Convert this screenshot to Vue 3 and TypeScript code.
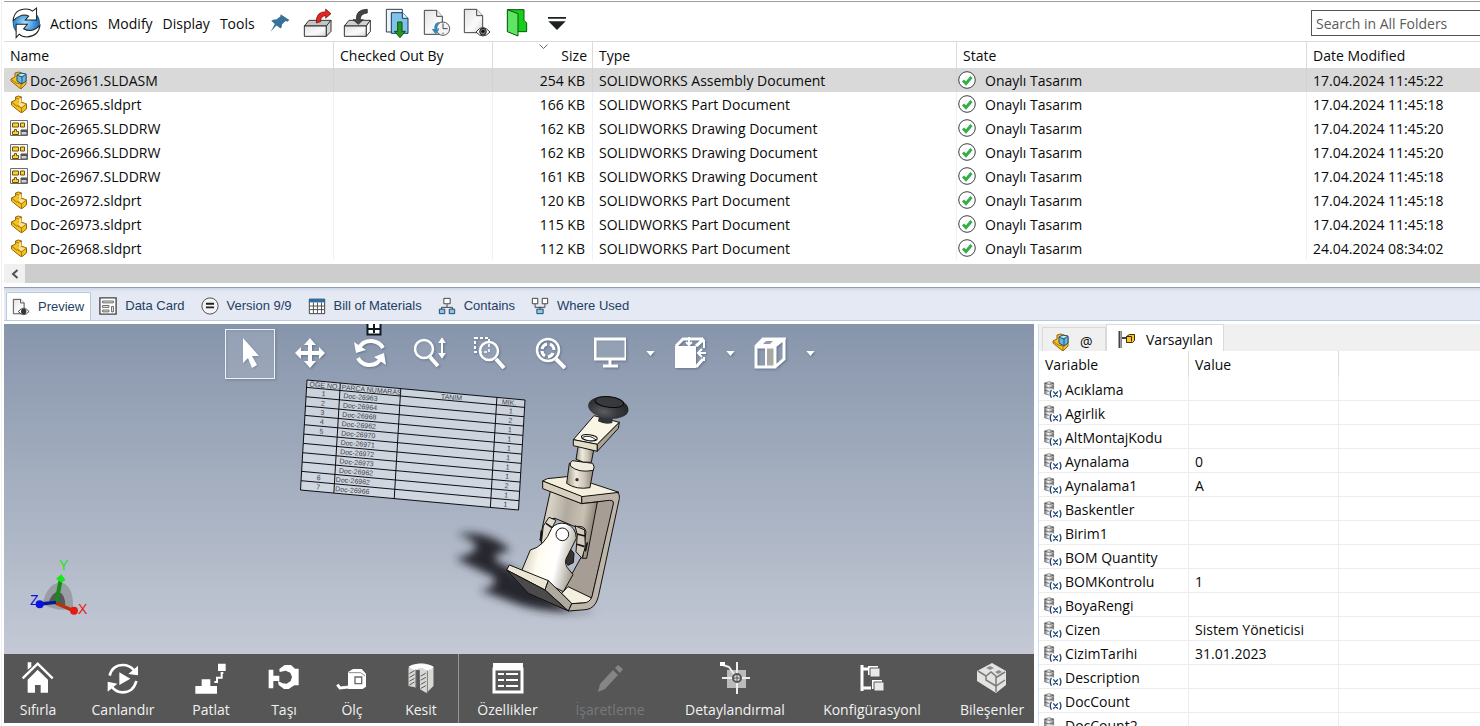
<script setup lang="ts">
import { ref } from 'vue'

interface FileRow {
  name: string
  icon: 'assembly' | 'part' | 'drawing'
  size: string
  type: string
  date: string
}

const state = 'Onaylı Tasarım'
const partType = 'SOLIDWORKS Part Document'
const drawingType = 'SOLIDWORKS Drawing Document'

const files: FileRow[] = [
  { name: 'Doc-26961.SLDASM', icon: 'assembly', size: '254 KB', type: 'SOLIDWORKS Assembly Document', date: '17.04.2024 11:45:22' },
  { name: 'Doc-26965.sldprt', icon: 'part', size: '166 KB', type: partType, date: '17.04.2024 11:45:18' },
  { name: 'Doc-26965.SLDDRW', icon: 'drawing', size: '162 KB', type: drawingType, date: '17.04.2024 11:45:20' },
  { name: 'Doc-26966.SLDDRW', icon: 'drawing', size: '162 KB', type: drawingType, date: '17.04.2024 11:45:20' },
  { name: 'Doc-26967.SLDDRW', icon: 'drawing', size: '161 KB', type: drawingType, date: '17.04.2024 11:45:18' },
  { name: 'Doc-26972.sldprt', icon: 'part', size: '120 KB', type: partType, date: '17.04.2024 11:45:18' },
  { name: 'Doc-26973.sldprt', icon: 'part', size: '115 KB', type: partType, date: '17.04.2024 11:45:18' },
  { name: 'Doc-26968.sldprt', icon: 'part', size: '112 KB', type: partType, date: '24.04.2024 08:34:02' },
]
const selected = ref(0)

const menus = ['Actions', 'Modify', 'Display', 'Tools']
const commands = [
  { id: 'checkout', label: 'Check out' },
  { id: 'checkin', label: 'Check in' },
  { id: 'getlatest', label: 'Get latest version' },
  { id: 'getversion', label: 'Get version' },
  { id: 'viewfile', label: 'View file' },
  { id: 'explore', label: 'Open folder' },
  { id: 'more', label: 'More commands' },
]

const tabs = [
  { id: 'preview', label: 'Preview' },
  { id: 'datacard', label: 'Data Card' },
  { id: 'version', label: 'Version 9/9' },
  { id: 'bom', label: 'Bill of Materials' },
  { id: 'contains', label: 'Contains' },
  { id: 'whereused', label: 'Where Used' },
]
const activeTab = ref('preview')

const viewTools = [
  { id: 'select', label: 'Select', menu: false },
  { id: 'pan', label: 'Pan', menu: false },
  { id: 'rotate', label: 'Rotate', menu: false },
  { id: 'zoom', label: 'Zoom', menu: false },
  { id: 'zoomarea', label: 'Zoom to area', menu: false },
  { id: 'zoomfit', label: 'Zoom to fit', menu: false },
  { id: 'screen', label: 'Full screen', menu: true },
  { id: 'orient', label: 'View orientation', menu: true },
  { id: 'shading', label: 'Display style', menu: true },
]
const activeTool = ref('select')

const actions = [
  { id: 'home', label: 'Sıfırla', size: 'w68' },
  { id: 'animate', label: 'Canlandır', size: 'w102' },
  { id: 'explode', label: 'Patlat', size: 'w74' },
  { id: 'move', label: 'Taşı', size: 'w72' },
  { id: 'measure', label: 'Ölç', size: 'w64' },
  { id: 'section', label: 'Kesit', size: 'w74' },
  { id: 'properties', label: 'Özellikler', size: 'w98', split: true },
  { id: 'markup', label: 'İşaretleme', size: 'w108', disabled: true },
  { id: 'detail', label: 'Detaylandırmal', size: 'w142' },
  { id: 'config', label: 'Konfigürasyonl', size: 'w132' },
  { id: 'components', label: 'Bileşenler', size: 'w108' },
]

const variables: [string, string][] = [
  ['Acıklama', ''], ['Agirlik', ''], ['AltMontajKodu', ''], ['Aynalama', '0'], ['Aynalama1', 'A'],
  ['Baskentler', ''], ['Birim1', ''], ['BOM Quantity', ''], ['BOMKontrolu', '1'], ['BoyaRengi', ''],
  ['Cizen', 'Sistem Yöneticisi'], ['CizimTarihi', '31.01.2023'], ['Description', ''], ['DocCount', ''], ['DocCount2', ''],
]

/* Parts table that hangs in the 3D scene: a slightly tilted sheet. */
const bom: [string, string, string][] = [
  ['1', 'Doc-26963', '1'], ['2', 'Doc-26964', '2'], ['3', 'Doc-26968', '1'], ['4', 'Doc-26962', '1'],
  ['5', 'Doc-26970', '1'], ['', 'Doc-26971', '1'], ['', 'Doc-26972', '1'], ['', 'Doc-26973', '1'],
  ['', 'Doc-26962', '2'], ['6', 'Doc-26962', '1'], ['7', 'Doc-26966', '1'],
]
const sheetPoint = (u: number, v: number): [number, number] => [307 + 218 * u - 6.5 * v, 380 + 20 * u + 110 * v]
const sheetLine = (u1: number, v1: number, u2: number, v2: number): string =>
  `M${sheetPoint(u1, v1).join(' ')}L${sheetPoint(u2, v2).join(' ')}`
const rowAt = (i: number): number => (i === 0 ? 0 : (7.4 + (i - 1) * 9.33) / 110)
const columnsAt = [0, 0.153, 0.43, 0.871, 1]
const sheetGrid = [
  ...Array.from({ length: 12 }, (_, i) => sheetLine(0, rowAt(i), 1, rowAt(i))),
  sheetLine(0, 1, 1, 1),
  ...columnsAt.map((u) => sheetLine(u, 0, u, 1)),
].join('')
const sheetText = (u: number, v: number): string => `translate(${sheetPoint(u, v).join(' ')}) rotate(5)`
</script>

<template>
  <div class="app">
    <svg class="defs" aria-hidden="true">
      <defs>
        <linearGradient id="paper" x1="0" y1="0" x2="1" y2="1"><stop offset="0" stop-color="#e2e2e2" /><stop offset=".6" stop-color="#fafafa" /><stop offset="1" stop-color="#d4d4d4" /></linearGradient>
        <radialGradient id="globe" cx=".45" cy=".5" r=".6"><stop offset="0" stop-color="#aee0fb" /><stop offset=".6" stop-color="#3c95dc" /><stop offset="1" stop-color="#1c5ea8" /></radialGradient>
        <linearGradient id="drum"><stop offset="0" stop-color="#777" /><stop offset=".4" stop-color="#f4f4f4" /><stop offset="1" stop-color="#888" /></linearGradient>
      </defs>

      <symbol id="part" viewBox="1 0 17 18">
        <path d="M2 7l4-2V2l3-1 3 1v5l5 2v5l-5 4-4-3-6-5z" fill="#f3c21f" stroke="#94660f" />
        <path d="M2 7l5 4 5-3 5 1-5 4-4-2M6 3l3 1 3-2M9 4v4M12 13v5" fill="none" stroke="#a87512" />
        <path d="M9 4l3-1v4l-3 2zM8 9l4-1 4 1-4 3z" fill="#ffe48a" />
      </symbol>
      <symbol id="assembly" viewBox="1 0 18 18">
        <path d="M2 8l4-2V2l4-1 7 3v9l-5 5-4-3-6-5z" fill="#f3c21f" stroke="#94660f" />
        <path d="M2 8l5 4 5 1v4" fill="none" stroke="#a87512" />
        <path d="M8 4l4-2 5 1v7l-4 3-5-3z" fill="#6cb7df" stroke="#245070" />
        <path d="M8 4l5 2 4-3M13 6v7" fill="none" stroke="#245070" />
        <path d="M9 4l3-1 4 0-3 2z" fill="#c8eafa" />
      </symbol>
      <symbol id="drawing" viewBox="0 0 18 18">
        <path d="M.5 1.500h17v15h-17z" fill="#f7f7f4" stroke="#6e6e6e" />
        <path d="M2.500 4h6v4h-6zM10.500 4h4v4h-4zM4.500 10.500h2v2h2v3h-6v-3h2z" fill="#ffcf2b" stroke="#6d5312" />
        <path d="M11 11h6v5h-6z" fill="#d2d2d2" stroke="#555" />
        <path d="M11 11h6v2h-6z" fill="#555" />
      </symbol>
      <symbol id="approved" viewBox="0 0 18 18">
        <circle cx="9" cy="9" r="8.300" fill="#fff" stroke="#3a4140" />
        <path d="M5 9.500l3 3L13.500 6" fill="none" stroke="#37ad4a" stroke-width="3" />
      </symbol>
      <symbol id="variable" viewBox="42 180 54 56">
        <path d="M43 186q14-8 28 0v34q-14 8-28 0z" fill="url(#drum)" stroke="#666" stroke-width="2" />
        <path d="M43 187q14 7 28 0M43 198q14 7 28 0M43 209q14 7 28 0" fill="none" stroke="#444" stroke-width="2" />
        <path d="M58 206h40v30h-40z" fill="#fff" />
        <path d="M64 208q-7 11 0 24M90 208q7 11 0 24M70 212l14 17M84 212l-14 17" fill="none" stroke="#1e456e" stroke-width="4" />
      </symbol>

      <symbol id="refresh" viewBox="34 22 88 94">
        <circle cx="79" cy="69" r="39" fill="url(#globe)" stroke="#173d69" stroke-width="2" />
        <path d="M40 62Q44 28 78 28q12 0 19 6l12-9v35H76l10-11q-18-11-46 13z" fill="#fff" stroke="#222" stroke-width="3" />
        <path d="M119 76q-4 32-39 34-14 0-22-8l-9 10V73h33L71 86q24 14 48-10z" fill="#fff" stroke="#222" stroke-width="3" />
      </symbol>
      <symbol id="pin" viewBox="808 36 62 58">
        <path d="M841 38l27 18-6 5-6-2-11 11q1 8-4 12L828 73l-18 19 13-24-11-10q6-5 15-4l13-9z" fill="#377099" />
      </symbol>
      <symbol id="checkout" viewBox="36 21 96 96">
        <path d="M46 78l14-17h66l-12 17z" fill="#c4c4c4" stroke="#333" stroke-width="3" />
        <path d="M46 78h66v31H46z" fill="url(#paper)" stroke="#333" stroke-width="3" />
        <path d="M112 78l14-17v33l-14 15z" fill="#d4d4d4" stroke="#333" stroke-width="3" />
        <path d="M82 69Q80 35 110 35v-8l16 14-16 14v-8Q94 48 95 65z" fill="#e52620" stroke="#5e0b08" stroke-width="2" />
      </symbol>
      <symbol id="checkin" viewBox="156 21 96 96">
        <path d="M166 78l14-17h64l-12 17z" fill="#d0d0d0" stroke="#333" stroke-width="3" />
        <path d="M166 78h66v31h-66z" fill="url(#paper)" stroke="#333" stroke-width="3" />
        <path d="M232 78l12-17v33l-12 15z" fill="#fff" stroke="#333" stroke-width="3" />
        <path d="M235 28q-35 0-33 31h-10l16 14 15-14h-9q-1-18 21-20z" fill="#444" stroke="#222" stroke-width="2" />
      </symbol>
      <symbol id="getlatest" viewBox="276 21 96 96">
        <path d="M292 28h48v68h-48z" fill="#f2f2f2" stroke="#29425b" stroke-width="3" />
        <path d="M307 38h33l17 17v45h-50z" fill="#7fc2ea" stroke="#173c5e" stroke-width="3" />
        <path d="M340 38v17h17" fill="#d8effc" stroke="#173c5e" stroke-width="3" />
        <path d="M326 66h13v28h10l-16 19-17-19h10z" fill="#259622" stroke="#0d4f0c" stroke-width="3" />
      </symbol>
      <symbol id="getversion" viewBox="396 21 96 96">
        <path d="M406 31h37l17 18v54h-54z" fill="url(#paper)" stroke="#444" stroke-width="3" />
        <path d="M443 31v18h17" fill="#eee" stroke="#444" stroke-width="3" />
        <circle cx="462" cy="86" r="20" fill="#f4f4f4" stroke="#555" stroke-width="3" />
        <path d="M462 70v16h14M462 98v4M446 86h3" fill="none" stroke="#444" stroke-width="3" />
        <path d="M456 65q-12 4-11 23h6l-11 15-12-16h8q-2-22 20-22z" fill="#3b86b5" />
      </symbol>
      <symbol id="viewfile" viewBox="516 21 96 96">
        <path d="M526 28h37l18 19v51h-55z" fill="url(#paper)" stroke="#444" stroke-width="3" />
        <path d="M563 28v19h18" fill="#eee" stroke="#444" stroke-width="3" />
        <path d="M561 96q20-27 42 0-21 24-42 0z" fill="#fff" stroke="#333" stroke-width="3" />
        <circle cx="582" cy="95" r="10" fill="#777" stroke="#222" stroke-width="3" /><circle cx="582" cy="94" r="5" fill="#111" />
      </symbol>
      <symbol id="explore" viewBox="636 21 96 96">
        <path d="M656 29h49v32l8 8v26h-56z" fill="#17cf1b" stroke="#08560a" stroke-width="3" />
        <path d="M655 29l32 12v67l-32-13z" fill="#5fe563" stroke="#08560a" stroke-width="3" />
      </symbol>
      <symbol id="more" viewBox="756 21 96 96">
        <path d="M777 51h54v5h-54zM778 64h52l-26 26z" fill="#1d211d" />
      </symbol>

      <symbol id="preview" viewBox="0 0 20 20">
        <path d="M1.500 1.500h8l4 4v12h-12z" fill="url(#paper)" stroke="#444" /><path d="M9.500 1.500v4h4" fill="#fff" stroke="#444" />
        <path d="M7 15q6-7 12 0-6 7-12 0z" fill="#fff" stroke="#333" /><circle cx="13" cy="15" r="3" fill="#333" />
      </symbol>
      <symbol id="datacard" viewBox="0 0 20 20">
        <path d="M1 1h18v18H1z" fill="#fff" stroke="#444" stroke-width="1.500" />
        <path d="M4 4.500h12v2H4zM4 9.500h7v2H4zM4 14.500h7v2H4zM14 10.500h2v6h-2z" fill="#fff" stroke="#555" />
      </symbol>
      <symbol id="version" viewBox="0 0 20 20">
        <circle cx="10" cy="10" r="9" fill="#f4f4f4" stroke="#444" /><path d="M5.500 7.500h9M5.500 11.500h9" stroke="#222" stroke-width="2" />
      </symbol>
      <symbol id="bom" viewBox="0 0 20 20">
        <path d="M1.500 2.500h17v16h-17z" fill="#fff" stroke="#333" /><path d="M1 2h18v4H1z" fill="#2c6e9f" />
        <path d="M6 6v12M10.500 6v12M15 6v12M2 10h16M2 14h16" stroke="#444" />
      </symbol>
      <symbol id="contains" viewBox="0 0 20 20">
        <path d="M10 8v3.500M4 14v-2.500h12V14" fill="none" stroke="#333" /><path d="M6.500 1.500h7v6h-7z" fill="#fff" stroke="#333" />
        <path d="M1.500 13.500h6v5h-6zM12.500 13.500h6v5h-6z" fill="#8bc8ec" stroke="#173c5e" />
      </symbol>
      <symbol id="whereused" viewBox="0 0 20 20">
        <path d="M4.500 8v3.500h11V8M10 11v3" fill="none" stroke="#333" /><path d="M1.500 1.500h6v6h-6zM12.500 1.500h6v6h-6z" fill="#fff" stroke="#333" />
        <path d="M6.500 13.500h7v5h-7z" fill="#8bc8ec" stroke="#173c5e" />
      </symbol>

      <symbol id="select" viewBox="0 0 32 32"><path d="M9 1l16 18-7 0 5 9-5 3-4-10-5 5z" fill="#fff" /></symbol>
      <symbol id="pan" viewBox="0 0 32 32"><path d="M16 1l6 7h-4v6h7v-4l6 6-6 6v-4h-7v6h4l-6 7-6-7h4v-6H7v4l-6-6 6-6v4h7V8h-4z" fill="#fff" /></symbol>
      <symbol id="rotate" viewBox="0 0 32 32">
        <path d="M4 13Q8 3 18 4q8 1 11 7M28 19q-4 10-14 9-7-1-10-7" fill="none" stroke="#fff" stroke-width="4" />
        <path d="M0 5l2 11 10-3zM32 28l-2-12-10 4z" fill="#fff" />
      </symbol>
      <symbol id="zoom" viewBox="0 0 32 32">
        <circle cx="10" cy="12" r="9" fill="#bac5d5" fill-opacity=".35" stroke="#fff" stroke-width="2.500" /><path d="M16 20l8 9" stroke="#fff" stroke-width="4" />
        <path d="M28 4v15M26 5l2-3 2 3zM26 17l2 3 2-3z" fill="#fff" stroke="#fff" stroke-width="2" />
      </symbol>
      <symbol id="zoomarea" viewBox="0 0 32 32">
        <path d="M1 1h14v14H1z" fill="none" stroke="#fff" stroke-width="2" stroke-dasharray="3 2" />
        <circle cx="15" cy="14" r="9" fill="#bac5d5" fill-opacity=".35" stroke="#fff" stroke-width="2.500" /><path d="M22 22l8 9" stroke="#fff" stroke-width="4" />
      </symbol>
      <symbol id="zoomfit" viewBox="0 0 32 32">
        <circle cx="14" cy="13" r="11" fill="none" stroke="#fff" stroke-width="2.500" /><path d="M22 22l9 9" stroke="#fff" stroke-width="4" />
        <path d="M8 12q1-4 5-5M16 7q4 2 4 6M19 16q-1 3-5 4M11 19q-3-2-3-5" fill="none" stroke="#fff" stroke-width="3" />
      </symbol>
      <symbol id="screen" viewBox="0 0 32 32">
        <path d="M1 2h31v20H1z" fill="#bac5d5" fill-opacity=".4" stroke="#fff" stroke-width="3" /><path d="M16 22v6M9 29h15" stroke="#fff" stroke-width="3" />
      </symbol>
      <symbol id="orient" viewBox="0 0 32 32">
        <path d="M1 9h21v22H1z" fill="#fff" /><path d="M2 9l7-7h20M22 9l8-7M22 30l7-8" fill="none" stroke="#fff" stroke-width="3" />
        <path d="M15 0v8M12 5l3 3 3-3M32 16h-8M28 12l-4 4 4 4M30 3v8M30 20v4" fill="none" stroke="#fff" stroke-width="2" />
      </symbol>
      <symbol id="shading" viewBox="0 0 32 32">
        <path d="M12 10h9v20h-9z" fill="#a9a9a4" /><path d="M2 10h19v20H2z M2 9l7-7h21l-9 7M30 2v20l-9 8" fill="none" stroke="#fff" stroke-width="3" />
        <path d="M12 10v20" stroke="#fff" stroke-width="2" /><path d="M3 9l7-7h19l-8 7z" fill="#fff" /><path d="M9 7l3-3h7l-3 3z" fill="#8f9cb0" />
      </symbol>

      <symbol id="home" viewBox="66 364 96 96">
        <path d="M68 413l45-44 45 44" fill="none" stroke="#fff" stroke-width="7" /><path d="M83 365h11v13l-11 9z" fill="#fff" />
        <path d="M83 417l30-30 31 30v39h-22v-23h-17v23H83z" fill="#fff" />
      </symbol>
      <symbol id="animate" viewBox="321 364 96 96">
        <path d="M329 405q8-32 40-32 20 0 32 15M409 421q-9 34-41 34-20 0-32-16" fill="none" stroke="#fff" stroke-width="8" />
        <path d="M414 375v29l-29-4zM323 453v-30l29 6zM358 395l33 19-33 19z" fill="#fff" />
      </symbol>
      <symbol id="explode" viewBox="588 364 96 96">
        <path d="M589 436h19v-20h26v20h20v23h-65zM657 369h23v22h-23z" fill="#fff" />
        <path d="M646 424h8v-13h14v-14h5" fill="none" stroke="#fff" stroke-width="6" />
      </symbol>
      <symbol id="move" viewBox="804 364 96 96">
        <path d="M806 387h14v18h18v16h-18v22h-14z" fill="#fff" />
        <path d="M838 385l16-12h19l12 11h11v50h-13l-17 11h-14l-16-12-2-12 14 7 12 1 12-8 4-12-5-13-14-6-18 4z" fill="#fff" />
      </symbol>
      <symbol id="measure" viewBox="1006 364 96 96">
        <path d="M1042 394l15-9h26l13 14v39l-10 7h-44z" fill="#fff" />
        <path d="M1044 396h36l13 10" fill="none" stroke="#8a8b8a" stroke-width="3" />
        <path d="M1063 409h20v20h-20z" fill="#fff" stroke="#666766" stroke-width="4" />
        <path d="M1010 432l8 10 24-3" fill="none" stroke="#fff" stroke-width="9" /><path d="M1018 435h20" stroke="#555655" stroke-width="2" />
      </symbol>
      <symbol id="section" viewBox="1216 364 96 100">
        <path d="M1225 382q36-27 78-3v60l-22 22-20-12-1-60-12 0v55l-23-5z" fill="#d8d8d5" />
        <path d="M1225 379q10-10 35-9 35 0 43 10-8 12-26 8-15-14-30 3z" fill="#fff" />
        <path d="M1248 387v56M1284 392v68" stroke="#777877" stroke-width="3" />
        <path d="M1228 400l16-9M1228 412l16-9M1228 424l16-9M1228 436l16-10M1263 408l16-9M1263 421l16-9M1263 434l16-9M1263 447l16-9" stroke="#555655" stroke-width="3" />
      </symbol>
      <symbol id="properties" viewBox="0 0 32 32">
        <path d="M2 7h28v23H2z" fill="none" stroke="#fff" stroke-width="3" /><path d="M1 1h30v7H1z" fill="#fff" />
        <path d="M6 12h6M14 12h12M6 18h6M14 18h12M6 24h6M14 24h12" stroke="#fff" stroke-width="2" />
      </symbol>
      <symbol id="markup" viewBox="0 0 32 32"><path d="M4 30l2-8L19 8l5 5-13 14zM21 6l3-3 5 4-3 4z" fill="#858585" /></symbol>
      <symbol id="detail" viewBox="0 0 32 32">
        <path d="M8 8h19v18H8z" fill="#ddd" fill-opacity=".75" /><path d="M18 0v32M3 16h28M4 3l6 2 7 10" fill="none" stroke="#eee" stroke-width="2" />
        <path d="M1 0h5v4H1z" fill="#fff" /><circle cx="18" cy="16" r="4" fill="#ddd" stroke="#555" stroke-width="2" /><path d="M15 16h6M18 13v6" stroke="#555" />
      </symbol>
      <symbol id="config" viewBox="0 0 32 32">
        <path d="M6 3v26M5 7h7M5 26h10" fill="none" stroke="#fff" stroke-width="3" />
        <path d="M12 4h10v9H12zM16 18h10v9H16z" fill="#fff" /><path d="M14 6h10v9H14zM18 20h10v9H18z" fill="#e9e9e9" stroke="#555655" />
      </symbol>
      <symbol id="components" viewBox="0 0 32 32">
        <path d="M1 9L16 1l14 8v14l-10 8L1 19z" fill="#e3e3e1" /><path d="M2 9l8 5 5-4 6 5 8-5M10 14v4l10 6v6M20 15v9l9-6" fill="none" stroke="#7b7c7b" stroke-width="1.500" />
        <path d="M10 6l4-2 4 2-4 2zM19 10l4-2 3 2-4 2z" fill="#8d8d8c" />
      </symbol>

      <symbol id="configuration" viewBox="0 0 18 18">
        <path d="M1.500 0v17M3 7h6" fill="none" stroke="#444" stroke-width="2" /><path d="M3.500 0v17" stroke="#888" />
        <path d="M8.500 5.500l3-2h5v6l-2 2h-6z" fill="#f9c727" stroke="#3b2b08" /><path d="M8.500 5.500h5v5" fill="none" stroke="#3b2b08" />
      </symbol>
    </svg>

    <header class="toolbar">
      <button class="icon-button" aria-label="Refresh"><svg class="refresh" aria-hidden="true"><use href="#refresh" /></svg></button>
      <nav class="menus" aria-label="Main menu">
        <button v-for="menu in menus" :key="menu">{{ menu }}</button>
      </nav>
      <button class="icon-button" aria-label="Pin"><svg class="pin" aria-hidden="true"><use href="#pin" /></svg></button>
      <div class="commands">
        <button v-for="command in commands" :key="command.id" class="icon-button" :aria-label="command.label">
          <svg class="icon32" aria-hidden="true"><use :href="'#' + command.id" /></svg>
        </button>
      </div>
      <input class="search" type="search" placeholder="Search in All Folders" aria-label="Search in All Folders" />
    </header>

    <section class="files">
      <table class="file-table">
        <colgroup>
          <col class="c-name" /><col class="c-checked" /><col class="c-size" /><col class="c-type" /><col class="c-state" /><col />
        </colgroup>
        <thead>
          <tr>
            <th scope="col">Name</th>
            <th scope="col">Checked Out By</th>
            <th scope="col" class="size">
              <svg class="sort" viewBox="0 0 9 5" aria-hidden="true"><path d="M.5 .5l4 4 4-4" fill="none" stroke="#666" /></svg>
              Size
            </th>
            <th scope="col">Type</th>
            <th scope="col">State</th>
            <th scope="col">Date Modified</th>
          </tr>
        </thead>
        <tbody>
          <tr v-for="(file, i) in files" :key="file.name" :class="{ selected: i === selected }" @click="selected = i">
            <td><span class="file-name"><svg class="icon18" aria-hidden="true"><use :href="'#' + file.icon" /></svg>{{ file.name }}</span></td>
            <td></td>
            <td class="size">{{ file.size }}</td>
            <td>{{ file.type }}</td>
            <td class="state-cell"><span class="state"><svg class="icon18" aria-hidden="true"><use href="#approved" /></svg>{{ state }}</span></td>
            <td>{{ file.date }}</td>
          </tr>
        </tbody>
      </table>
      <div class="scrollbar">
        <button aria-label="Scroll left"><svg viewBox="0 0 8 10" aria-hidden="true"><path d="M6.500 1l-4.500 4 4.500 4" fill="none" stroke="#505050" stroke-width="2" /></svg></button>
        <div class="thumb"></div>
      </div>
    </section>

    <nav class="tabs" role="tablist">
      <button
        v-for="tab in tabs"
        :key="tab.id"
        role="tab"
        :aria-selected="tab.id === activeTab"
        :class="{ active: tab.id === activeTab }"
        @click="activeTab = tab.id"
      >
        <svg class="icon18" aria-hidden="true"><use :href="'#' + tab.id" /></svg>{{ tab.label }}
      </button>
    </nav>

    <main class="split">
      <section class="viewer">
        <div class="canvas">
          <svg class="scene" viewBox="4 324 1030 330" aria-hidden="true">
            <defs>
              <linearGradient id="tube"><stop offset="0" stop-color="#9b9587" /><stop offset=".35" stop-color="#efeadb" /><stop offset=".65" stop-color="#cfc7b9" /><stop offset="1" stop-color="#8d867c" /></linearGradient>
              <linearGradient id="yoke" x1="0" y1=".3" x2="1" y2=".6"><stop offset="0" stop-color="#cdc6ad" /><stop offset=".35" stop-color="#fffdf2" /><stop offset=".65" stop-color="#fff" /><stop offset="1" stop-color="#9a9483" /></linearGradient>
              <linearGradient id="barrel" x1="0" y1="0" x2="1" y2=".2"><stop offset="0" stop-color="#8b8478" /><stop offset=".2" stop-color="#d9d3c6" /><stop offset=".5" stop-color="#b2aa9f" /><stop offset=".8" stop-color="#c8c1b2" /><stop offset="1" stop-color="#8c8479" /></linearGradient>
              <radialGradient id="knob" cx=".4" cy=".7" r=".7"><stop offset="0" stop-color="#5b5c60" /><stop offset=".5" stop-color="#38393d" /><stop offset="1" stop-color="#232427" /></radialGradient>
              <filter id="soft" x="-20%" y="-20%" width="140%" height="140%"><feGaussianBlur stdDeviation="12" /></filter>
            </defs>

            <path d="M307 380L525 400L518.500 510L300.500 490z" fill="#e0e6ed" fill-opacity=".72" />
            <path :d="sheetGrid" fill="none" stroke="#0c0e12" />
            <g class="sheet-text">
              <text :transform="sheetText(0.012, 0.058)">ÖĞE NO.</text>
              <text :transform="sheetText(0.16, 0.058)">PARÇA NUMARAS</text>
              <text :transform="sheetText(0.615, 0.058)">TANIM</text>
              <text :transform="sheetText(0.895, 0.058)">MİK.</text>
              <template v-for="(row, i) in bom" :key="i">
                <text :transform="sheetText(0.07, rowAt(i + 1) + 0.066)">{{ row[0] }}</text>
                <text :transform="sheetText(i > 8 ? 0.158 : 0.17, rowAt(i + 1) + 0.066)">{{ row[1] }}</text>
                <text :transform="sheetText(0.93, rowAt(i + 1) + 0.066)">{{ row[2] }}</text>
              </template>
            </g>

            <g transform="translate(440 380) scale(.3333)" stroke-linejoin="round">
              <path d="M50 462Q150 450 212 512L175 520Q145 540 205 560L390 690L470 692Q340 705 240 675L120 630Q180 620 160 590L45 535Q100 525 110 500Q100 475 50 462z" fill="#26282d" filter="url(#soft)" />
              <g stroke="#14120f" stroke-width="3">
                <path d="M470 366L515 358L522 370L455 655L372 625L430 520z" fill="#a69d94" />
                <path d="M384 620L455 654L450 668L395 671L365 640z" fill="#f4f0df" />
                <path d="M425 348L528 337Q540 338 538 356L475 650Q466 686 438 689L385 693L395 671L430 669Q450 668 456 650L520 372Q522 360 508 361L425 371z" fill="#bdb5aa" />
                <path d="M331 334L425 371L472 366L440 535L428 535L438 455Q435 435 405 440L345 415Q322 414 315 440L300 480L306 448z" fill="url(#barrel)" />
                <path d="M327 412L348 421L338 440L322 487L304 490L310 438z" fill="#e1dccf" /><path d="M405 437L434 450L436 500L426 535L408 515L412 465z" fill="#d2cbbd" />
                <path d="M318 430L336 443M304 452L302 484M411 462L435 468M411 493L434 500M442 487L436 514" fill="none" stroke-width="5" />
                <path d="M385 500L402 520L400 548L384 556L374 540z" fill="#37342f" />
                <path d="M271 510Q313 500 335 445Q350 425 378 431Q408 441 409 475L384 525Q370 545 382 563L399 584L370 635L245 572z" fill="url(#yoke)" />
                <circle cx="367" cy="463" r="19" fill="#fff" />
                <path d="M200 570L208 555L325 602L315 630z" fill="#ece7d5" /><path d="M315 630L325 602L395 670L385 693z" fill="#b0a99f" />
                <path d="M200 570L315 630L385 693L265 640z" fill="#4b4b4b" />
                <path d="M308 303L322 296L380 290L455 310L537 337L425 350z" fill="#f5f0dd" /><path d="M308 303L425 349L425 371L308 326z" fill="#d7d0bd" />
                <path d="M388 250L380 310Q408 330 450 323L460 267z" fill="url(#tube)" />
                <path d="M397 242Q388 248 391 258Q416 280 460 271Q466 261 458 250z" fill="#f0ecdf" />
                <path d="M415 197L408 238Q430 250 454 247L461 211z" fill="url(#tube)" />
                <path d="M400 179L462 107L538 127L472 193z" fill="#faf6e5" /><path d="M400 179L472 193L472 214L400 197z" fill="#e3ddca" /><path d="M472 193L538 127L535 145L472 214z" fill="#aca493" />
                <ellipse cx="448" cy="173" rx="24" ry="9" fill="#fff" transform="rotate(8 448 173)" />
                <path d="M428 172Q448 162 468 180" fill="none" />
                <path d="M478 105L474 124Q495 135 517 129L518 110z" fill="#303236" stroke="none" />
              </g>
              <ellipse cx="505" cy="83" rx="61" ry="33" fill="url(#knob)" transform="rotate(8 505 83)" />
              <ellipse cx="508" cy="66" rx="43" ry="16" fill="#38393d" stroke="#08090a" stroke-width="3" transform="rotate(7 508 66)" />
              <circle cx="411" cy="299" r="5" fill="#332f28" />
            </g>

            <g transform="translate(0 540) scale(.3333)">
              <path d="M128 192Q140 132 182 127Q222 138 219 205Q175 218 128 192z" fill="#8f9295" fill-opacity=".75" />
              <path d="M145 190Q155 158 174 155Q195 160 196 195z" fill="#55575b" />
              <path d="M168 190L182 120" stroke="#168c13" stroke-width="12" /><path d="M168 116L184 103L197 120L184 128z" fill="#19e51c" />
              <path d="M168 190L220 212" stroke="#b83208" stroke-width="10" /><circle cx="222" cy="212" r="12" fill="#e41b15" />
              <path d="M168 187L120 192" stroke="#091896" stroke-width="10" /><circle cx="119" cy="193" r="12" fill="#0a12e0" />
            </g>
            <text class="axis axis-y" x="59" y="570">Y</text><text class="axis axis-z" x="30" y="605">Z</text><text class="axis axis-x" x="78" y="614">X</text>
            <path d="M367 324h14v11h-14z" fill="#fff" /><path d="M367.500 324v10.500h13V324M374 324v9M368 329h12" fill="none" stroke="#101820" stroke-width="2" />
          </svg>
          <div class="view-tools">
            <div v-for="tool in viewTools" :key="tool.id" class="tool-group" :class="{ 'with-menu': tool.menu }">
              <button class="tool" :class="{ active: tool.id === activeTool }" :aria-label="tool.label" @click="activeTool = tool.id">
                <svg class="icon32" aria-hidden="true"><use :href="'#' + tool.id" /></svg>
              </button>
              <button v-if="tool.menu" class="tool-menu" :aria-label="tool.label + ' options'">
                <svg viewBox="0 0 10 6" aria-hidden="true"><path d="M0 0h10L5 6z" fill="#fff" /></svg>
              </button>
            </div>
          </div>
        </div>
        <div class="action-bar">
          <button v-for="action in actions" :key="action.id" :class="[action.size, { split: action.split }]" :disabled="action.disabled">
            <svg class="icon32" aria-hidden="true"><use :href="'#' + action.id" /></svg>
            <span>{{ action.label }}</span>
          </button>
        </div>
      </section>

      <aside class="variables">
        <div class="config-tabs" role="tablist">
          <button role="tab" aria-selected="false"><svg class="icon18" aria-hidden="true"><use href="#assembly" /></svg>@</button>
          <button role="tab" aria-selected="true" class="active"><svg class="icon18" aria-hidden="true"><use href="#configuration" /></svg>Varsayılan</button>
        </div>
        <table class="variable-table">
          <colgroup><col class="v-name" /><col class="v-value" /><col /></colgroup>
          <thead>
            <tr><th scope="col">Variable</th><th scope="col">Value</th><td></td></tr>
          </thead>
          <tbody>
            <tr v-for="[name, value] in variables" :key="name">
              <td><span class="variable-name"><svg class="icon18" aria-hidden="true"><use href="#variable" /></svg>{{ name }}</span></td>
              <td>{{ value }}</td>
              <td></td>
            </tr>
          </tbody>
        </table>
      </aside>
    </main>
  </div>
</template>

<style>
body {
  margin: 0;
  background: #fff;
}
</style>

<style scoped>
.app {
  box-sizing: border-box;
  display: flex;
  flex-direction: column;
  height: 100vh;
  margin-left: 1px;
  padding: 1px 0 0 2px;
  border-left: 1px solid #f0f0f0;
  overflow: hidden;
  color: #0a0a0a;
  font: 14px/24px "Open Sans", "Noto Sans", sans-serif;
}
.defs {
  position: absolute;
  width: 0;
  height: 0;
}
button {
  padding: 0;
  border: 0;
  background: none;
  color: inherit;
  font: inherit;
}
svg {
  display: block;
  flex: none;
}
.icon18 {
  width: 18px;
  height: 18px;
}
.icon32 {
  width: 32px;
  height: 32px;
}

.toolbar {
  display: flex;
  flex: none;
  align-items: center;
  box-sizing: border-box;
  height: 41px;
  padding: 3px 0 0 7px;
  border-top: 1px solid #a0a0a0;
  border-bottom: 1px solid #dcdcdc;
}
.refresh {
  width: 30px;
  height: 32px;
}
.menus {
  display: flex;
  gap: 10px;
  margin: 0 15px 0 9px;
  padding-top: 2px;
}
.pin {
  width: 20px;
  height: 20px;
}
.commands {
  display: flex;
  gap: 8px;
  margin-left: 11px;
}
.search {
  box-sizing: border-box;
  width: 169px;
  height: 26px;
  margin-left: auto;
  padding: 0 4px;
  border: 1px solid #555;
  border-right: 0;
  border-radius: 0;
  outline: 0;
  appearance: none;
  background: #fff;
  font: inherit;
}
.search::placeholder {
  color: #5b5b5b;
  opacity: 1;
}

.files {
  flex: none;
}
table {
  width: 100%;
  table-layout: fixed;
  border-collapse: separate;
  border-spacing: 0;
}
th,
td {
  box-sizing: border-box;
  padding: 2px 7px 0 6px;
  font-weight: 400;
  line-height: 22px;
  text-align: left;
  white-space: nowrap;
}
.file-table {
  margin-bottom: 4px;
}
.c-name { width: 330px; }
.c-checked { width: 159px; }
.c-size { width: 100px; }
.c-type { width: 364px; }
.c-state { width: 350px; }
.file-table th {
  position: relative;
  height: 26px;
  border-right: 1px solid #dcdcdc;
}
.file-table td {
  height: 24px;
  border-right: 1px solid #edf2fa;
}
.file-table th:last-child,
.file-table td:last-child {
  border-right: 0;
}
.file-table .selected td {
  border-color: #cfd4dc;
  background: #d9d9d9;
}
.file-table .size {
  padding-right: 7px;
  text-align: right;
}
.file-table th.size {
  padding-right: 5px;
}
.sort {
  position: absolute;
  top: 2px;
  left: 46px;
  width: 9px;
  height: 5px;
}
.file-name,
.state,
.variable-name {
  display: flex;
  align-items: center;
  gap: 2px;
}
.file-name svg,
.state svg {
  margin-top: -2px;
}
.file-table .state-cell {
  padding-left: 1px;
}
.state {
  gap: 9px;
}
.scrollbar {
  display: flex;
  height: 19px;
  background: #f0f0f0;
}
.scrollbar button {
  display: grid;
  place-items: center;
  width: 21px;
}
.scrollbar svg {
  width: 8px;
  height: 10px;
}
.thumb {
  flex: 1;
  background: #cdcdcd;
}

.tabs {
  display: flex;
  flex: none;
  align-items: flex-end;
  box-sizing: border-box;
  height: 34px;
  margin-top: 4px;
  padding-left: 2px;
  border-top: 1px solid #8e9bb0;
  border-bottom: 1px solid #b5cade;
  background: linear-gradient(#cfd6e4, #e4e9f4 4px);
  color: #1e4062;
  font: 13px/28px "Liberation Sans", Arial, sans-serif;
}
.tabs button {
  display: flex;
  align-items: center;
  gap: 8px;
  height: 28px;
  padding: 0 8px;
}
.tabs .active {
  padding: 0 6px 0 5px;
  border: 1px solid #b5cade;
  border-bottom: 0;
  border-radius: 2px 2px 0 0;
  background: #fff;
}

.split {
  display: flex;
  flex: 1;
  min-height: 0;
  padding-top: 3px;
}
.viewer {
  display: flex;
  flex: 1;
  flex-direction: column;
  min-width: 0;
  margin-bottom: 3px;
}
.canvas {
  position: relative;
  flex: 1;
  overflow: hidden;
  background: linear-gradient(#8795ac, #a2adbe 45%, #c4c9d5);
}
.scene {
  position: absolute;
  top: 0;
  left: 0;
  width: 1030px;
  height: 330px;
}
.sheet-text {
  fill: #3d4249;
  font: 7px "Liberation Sans", Arial, sans-serif;
}
.axis {
  font: 14px "Liberation Sans", Arial, sans-serif;
}
.axis-x { fill: #e41b15; }
.axis-y { fill: #19e51c; }
.axis-z { fill: #0a12e0; }
.view-tools {
  position: absolute;
  top: 5px;
  left: 221px;
  display: flex;
  gap: 10px;
}
.tool-group {
  display: flex;
  gap: 5px;
}
.with-menu + .with-menu {
  margin-left: -5px;
}
.tool,
.tool-menu {
  box-sizing: border-box;
  display: grid;
  place-items: center;
  width: 50px;
  height: 50px;
  padding-bottom: 2px;
  filter: drop-shadow(1px 1px 1px #66748b);
}
.tool.active {
  border: 1px solid #eef2f7;
  background: #ffffff26;
}
.tool-menu {
  width: 20px;
}
.tool-menu svg {
  width: 9px;
  height: 5px;
}
.action-bar {
  display: flex;
  flex: none;
  height: 69px;
  overflow: hidden;
  background: #555655;
  color: #f2f2f2;
  line-height: 20px;
}
.action-bar button {
  box-sizing: border-box;
  display: flex;
  flex: none;
  flex-direction: column;
  align-items: center;
  gap: 6px;
  padding-top: 8px;
}
.action-bar button:disabled {
  color: #78797d;
}
.action-bar .split {
  border-left: 1px solid #96979b;
}
.w64 { width: 64px; }
.w68 { width: 68px; }
.w72 { width: 72px; }
.w74 { width: 74px; }
.w98 { width: 98px; }
.w102 { width: 102px; }
.w108 { width: 108px; }
.w132 { width: 132px; }
.w142 { width: 142px; }

.variables {
  flex: none;
  box-sizing: border-box;
  width: 442px;
  margin-left: 4px;
  border-left: 1px solid #cfe0f5;
  overflow: hidden;
}
.config-tabs {
  display: flex;
  align-items: flex-end;
  height: 27px;
  padding-left: 3px;
  background: #f0f0f0;
}
.config-tabs button {
  box-sizing: border-box;
  display: flex;
  align-items: center;
  gap: 10px;
  width: 64px;
  height: 24px;
  padding: 4px 0 0 9px;
  border: 1px solid #dadada;
  border-bottom: 0;
}
.config-tabs .active {
  width: 118px;
  height: 27px;
  padding: 3px 0 0 11px;
  background: #fff;
}
.v-name,
.v-value {
  width: 150px;
}
.variable-table thead tr > * {
  height: 26px;
  border-right: 1px solid #dcdcdc;
}
.variable-table td {
  height: 24px;
  border-right: 1px solid #ececec;
}
.variable-table tbody td {
  border-bottom: 1px solid #ececec;
  line-height: 21px;
}
.variable-table tr > :last-child {
  border-right: 0;
}
.variable-table td:first-child {
  padding-left: 5px;
}
.variable-name {
  gap: 3px;
}
</style>
